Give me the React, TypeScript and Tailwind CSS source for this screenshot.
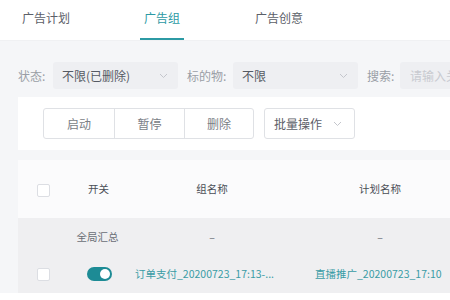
import React from "react";

const font = { fontFamily: '"Noto Sans CJK SC", "Noto Sans", sans-serif' };

function Chevron({ className = "" }: { className?: string }) {
  return (
    <svg width="9" height="6" viewBox="0 0 9 6" className={className}>
      <path d="M1 1l3.5 3.5L8 1" fill="none" stroke="#c4c6cc" strokeWidth="1" />
    </svg>
  );
}

function Select({ value, width }: { value: string; width: string }) {
  return (
    <div className={`${width} shrink-0 h-[27px] bg-[#eeeff2] rounded-[3px] flex items-center justify-between pl-[9px] pr-[10px]`}>
      <span className="text-[12px] text-[#555a63]">{value}</span>
      <Chevron />
    </div>
  );
}

function Checkbox() {
  return <div className="w-[13px] h-[13px] bg-white border border-[#dcdee3] rounded-[2px]" />;
}

export default function App() {
  return (
    <div className="w-[450px] h-[300px] overflow-hidden bg-white" style={font}>
      {/* tabs */}
      <div className="h-[41px] flex bg-white border-b border-[#f0f1f3]">
        <div className="w-[90px] shrink-0 pl-[22px] pt-[9px] text-[12px] text-[#5c6068]">广告计划</div>
        <div className="w-[165px] shrink-0 pl-[50px] flex">
          <div className="flex flex-col items-center w-[44px]">
            <span className="pt-[9px] text-[12px] text-[#2c9aa4]">广告组</span>
            <div className="mt-auto h-[2px] w-[44px] bg-[#2c9aa4]" />
          </div>
        </div>
        <div className="pt-[9px] text-[12px] text-[#5c6068]">广告创意</div>
      </div>

      <div className="bg-[#f5f6f8] pt-[21px]">
        {/* filters */}
        <div className="flex items-center h-[27px] pl-[18px] text-[12px] text-[#9a9ea6] overflow-hidden">
          <span className="w-[35px] shrink-0">状态:</span>
          <Select value="不限(已删除)" width="w-[125px]" />
          <span className="ml-[9px] w-[46px] shrink-0">标的物:</span>
          <Select value="不限" width="w-[125px]" />
          <span className="ml-[9px] w-[33px] shrink-0">搜索:</span>
          <div className="w-[80px] shrink-0 h-[27px] bg-[#eeeff2] rounded-[3px] flex items-center pl-[10px] text-[#c8cad0] whitespace-nowrap overflow-hidden">
            请输入关键词
          </div>
        </div>

        <div className="ml-[18px] mt-[8px]">
          {/* buttons */}
          <div className="bg-white h-[53px] flex items-center pl-[25px] gap-[10px]">
            <div className="flex h-[31px] border border-[#dfe1e5] rounded-[3px] text-[12px] text-[#7a7e86]">
              <div className="w-[70px] flex items-center justify-center">启动</div>
              <div className="w-[70px] flex items-center justify-center border-l border-[#dfe1e5]">暂停</div>
              <div className="w-[69px] flex items-center justify-center border-l border-[#dfe1e5]">删除</div>
            </div>
            <div className="w-[91px] h-[31px] border border-[#dfe1e5] rounded-[3px] flex items-center justify-between pl-[9px] pr-[12px] text-[12px] text-[#5c6068]">
              <span>批量操作</span>
              <Chevron />
            </div>
          </div>

          <div className="h-[10px]" />

          {/* table header */}
          <div className="bg-[#fbfbfc] h-[58px] flex items-center text-[10.5px] text-[#4a4e56]">
            <div className="w-[47px] shrink-0 pl-[19px] pt-[2px]"><Checkbox /></div>
            <div className="w-[65px] shrink-0 text-center pl-[2px]">开关</div>
            <div className="w-[164px] shrink-0 text-center">组名称</div>
            <div className="w-[172px] shrink-0 text-center">计划名称</div>
          </div>

          {/* summary row */}
          <div className="bg-[#efeff1] h-[37px] flex items-center text-[10.5px] text-[#6a6e76]">
            <div className="w-[47px] shrink-0" />
            <div className="w-[65px] shrink-0 text-center">全局汇总</div>
            <div className="w-[164px] shrink-0 text-center">–</div>
            <div className="w-[172px] shrink-0 text-center">–</div>
          </div>

          {/* data row */}
          <div className="bg-[#efeff1] h-[38px] flex items-center text-[10.5px] text-[#3a9ca5]">
            <div className="w-[47px] shrink-0 pl-[19px]"><Checkbox /></div>
            <div className="w-[65px] shrink-0 flex justify-center pl-[3px]">
              <div className="w-[25px] h-[14px] rounded-full bg-[#1d8b95] flex items-center justify-end pr-[2px]">
                <div className="w-[10px] h-[10px] rounded-full bg-white" />
              </div>
            </div>
            <div className="w-[164px] shrink-0 pl-[5px] whitespace-nowrap">订单支付_20200723_17:13-...</div>
            <div className="w-[172px] shrink-0 pl-[21px] whitespace-nowrap">直播推广_20200723_17:10</div>
          </div>
        </div>
      </div>
    </div>
  );
}
